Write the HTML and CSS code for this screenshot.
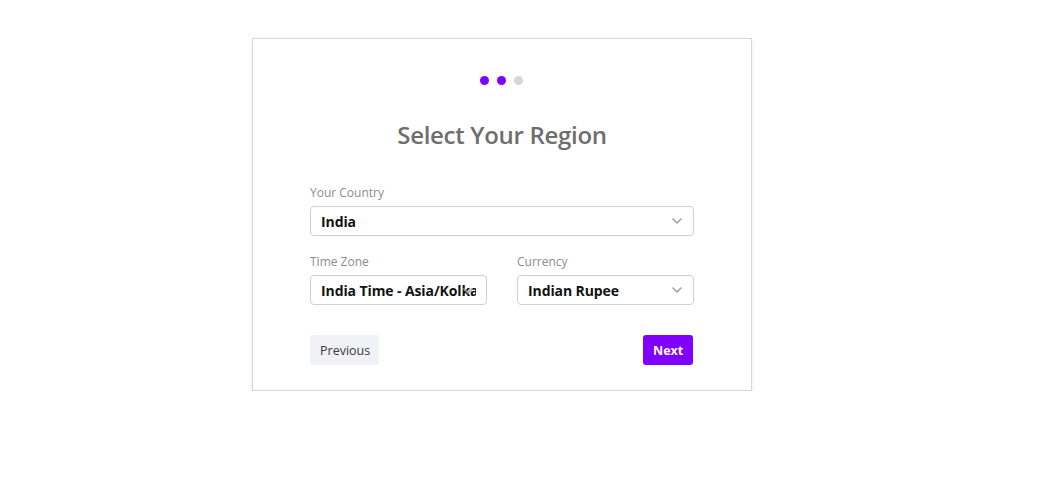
FILE: index.html
```html
<!DOCTYPE html>
<html>
<head>
<meta charset="utf-8">
<link rel="stylesheet" href="styles.css">
</head>
<body>
<div class="page">
  <div class="card">
    <div class="dots">
      <span class="dot on"></span>
      <span class="dot on"></span>
      <span class="dot"></span>
    </div>
    <h1 class="title">Select Your Region</h1>
    <div class="field">
      <label class="label">Your Country</label>
      <div class="select">
        <span class="value">India</span>
        <svg class="chev" width="10" height="6" viewBox="0 0 10 6"><path d="M1 1l4 4 4-4" fill="none" stroke="#9aa0a6" stroke-width="1.6" stroke-linecap="round" stroke-linejoin="round"/></svg>
      </div>
    </div>
    <div class="row">
      <div class="field">
        <label class="label">Time Zone</label>
        <div class="select clip">
          <span class="value">India Time - Asia/Kolkata</span>
          <svg class="chev over" width="10" height="6" viewBox="0 0 10 6"><path d="M1 1l4 4 4-4" fill="none" stroke="#9aa0a6" stroke-width="1.6" stroke-linecap="round" stroke-linejoin="round"/></svg>
        </div>
      </div>
      <div class="field">
        <label class="label">Currency</label>
        <div class="select">
          <span class="value">Indian Rupee</span>
          <svg class="chev" width="10" height="6" viewBox="0 0 10 6"><path d="M1 1l4 4 4-4" fill="none" stroke="#9aa0a6" stroke-width="1.6" stroke-linecap="round" stroke-linejoin="round"/></svg>
        </div>
      </div>
    </div>
    <div class="actions">
      <button class="btn prev">Previous</button>
      <button class="btn next">Next</button>
    </div>
  </div>
</div>
</body>
</html>
```

FILE: styles.css
```css
* { box-sizing: border-box; }
html, body { margin: 0; padding: 0; background: #fff; }
body { font-family: "Open Sans", "Noto Sans", sans-serif; }
.page { padding: 38px 0 0 252px; }
.card {
  width: 500px;
  height: 353px;
  border: 1px solid #d6d6d6;
  box-shadow: 0 3px 5px rgba(0,0,0,0.08);
  padding: 37px 57px 0 57px;
  background: #fff;
}
.dots { display: flex; justify-content: center; gap: 8px; padding-right: 2px; }
.dot { width: 9px; height: 9px; border-radius: 50%; background: #d6d6d6; }
.dot.on { background: #7f00ff; }
.title {
  margin: 33px 0 0 0;
  text-align: center;
  font-size: 24px;
  line-height: 34px;
  font-weight: 600;
  color: #6e6e6e;
  letter-spacing: -0.3px;
}
.field { display: flex; flex-direction: column; margin-top: 33px; min-width: 0; }
.label { font-size: 12px; line-height: 16px; color: #8c8c8c; margin-bottom: 5px; }
.select {
  position: relative;
  height: 30px;
  border: 1px solid #cfcfcf;
  border-radius: 4px;
  display: flex;
  align-items: center;
  padding: 0 10px;
  overflow: hidden;
}
.value { font-size: 14px; font-weight: 700; color: #111; white-space: nowrap; flex: 1; min-width: 0; overflow: hidden; letter-spacing: -0.1px; }
.chev { flex: none; margin-right: 1px; }
.chev.over { position: absolute; right: 12px; top: 12px; z-index: 2; }
.row { display: grid; grid-template-columns: 177px 177px; column-gap: 30px; margin-top: -2px; }
.row .field { margin-top: 20px; }
.actions { display: flex; justify-content: space-between; margin-top: 30px; padding-right: 1px; }
.btn {
  height: 30px;
  border: none;
  border-radius: 3px;
  font-family: inherit;
  font-size: 12.5px;
  padding: 0 10px;
}
.prev { background: #f0f2f5; color: #3a3a3a; width: 69px; }
.next { background: #7f00ff; color: #fff; font-weight: 700; width: 50px; }
```
